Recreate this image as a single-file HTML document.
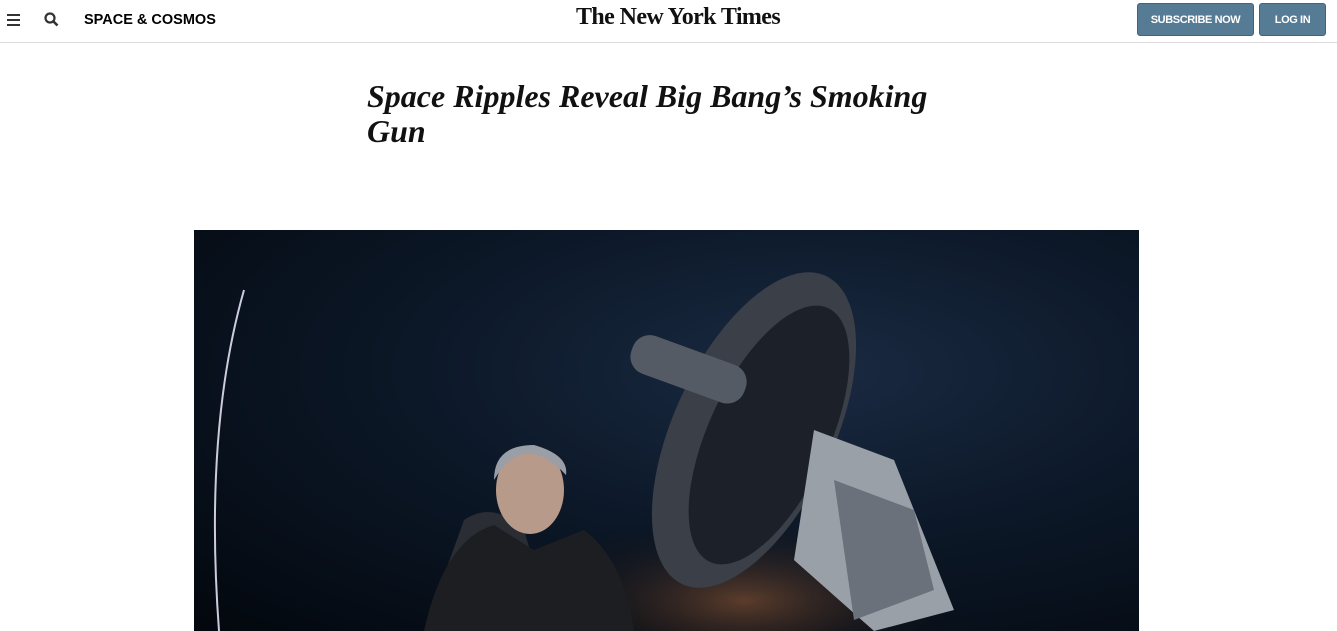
<!DOCTYPE html>
<html><head><meta charset="utf-8"><style>
body{margin:0;width:1337px;height:631px;overflow:hidden;background:#fff;font-family:"Liberation Sans",sans-serif;position:relative}
.hdr{position:absolute;left:0;top:0;width:1337px;height:42px;border-bottom:1px solid #ddd}
.sec{position:absolute;left:84px;top:12px;font-weight:bold;font-size:14.5px;color:#000;letter-spacing:0}
.logo{position:absolute;left:576px;top:4px;font-family:"Liberation Serif",serif;font-weight:bold;font-size:24px;color:#111;letter-spacing:-0.6px;white-space:nowrap}
.btn{position:absolute;top:3px;height:33px;background:#567b95;border:1px solid #3e6580;border-radius:3px;color:#fff;font-weight:bold;font-size:11px;line-height:33px;text-align:center;letter-spacing:-0.4px;box-sizing:border-box}
h1{position:absolute;left:367px;top:79px;margin:0;width:600px;font-family:"Liberation Serif",serif;font-style:italic;font-weight:bold;font-size:32px;line-height:35px;color:#111}
.img{position:absolute;left:194px;top:230px;width:945px;height:401px;overflow:hidden;background:radial-gradient(ellipse at 65% 35%,#1a2a42 0%,#0c1828 45%,#03070d 100%)}
</style></head><body>
<div class="hdr">
<svg style="position:absolute;left:7px;top:14px" width="13" height="12"><rect y="0" width="13" height="2" fill="#333"/><rect y="5" width="13" height="2" fill="#333"/><rect y="10" width="13" height="2" fill="#333"/></svg>
<svg style="position:absolute;left:44px;top:12px" width="15" height="15"><circle cx="6" cy="6" r="4.5" stroke="#333" stroke-width="2.2" fill="none"/><line x1="9.5" y1="9.5" x2="13.5" y2="13.5" stroke="#333" stroke-width="2.6"/></svg>
<div class="sec">SPACE &amp; COSMOS</div>
<div class="logo">The New York Times</div>
<div class="btn" style="left:1137px;width:117px">SUBSCRIBE NOW</div>
<div class="btn" style="left:1259px;width:67px">LOG IN</div>
</div>
<h1>Space Ripples Reveal Big Bang’s Smoking Gun</h1>
<div class="img">
<svg width="945" height="401" style="position:absolute;left:0;top:0">
<defs><radialGradient id="g" cx="0.5" cy="0.8" r="0.6"><stop offset="0" stop-color="#c0703a" stop-opacity="0.45"/><stop offset="1" stop-color="#000" stop-opacity="0"/></radialGradient></defs>
<rect x="350" y="250" width="400" height="151" fill="url(#g)"/>
<path d="M50 60 Q10 200 25 401" stroke="#ccd" stroke-width="2" fill="none"/>
<ellipse cx="560" cy="200" rx="80" ry="170" transform="rotate(25 560 200)" fill="#3a3f48"/>
<ellipse cx="575" cy="205" rx="60" ry="140" transform="rotate(25 575 205)" fill="#1c2028"/>
<rect x="445" y="100" width="120" height="40" rx="18" transform="rotate(20 445 100)" fill="#555b64"/>
<path d="M620 200 L700 230 L760 380 L680 401 L600 330 Z" fill="#9aa0a8"/>
<path d="M640 250 L720 280 L740 360 L660 390 Z" fill="#6b717a"/>
<path d="M270 290 Q300 270 330 300 L360 401 L230 401 Z" fill="#2a2d33"/>
<ellipse cx="336" cy="260" rx="34" ry="44" fill="#b89a8a"/>
<path d="M300 250 Q330 200 372 245 Q375 225 340 215 Q300 215 300 250Z" fill="#9a9ea6"/>
<path d="M230 401 Q250 310 300 295 L340 320 L390 300 Q430 330 440 401 Z" fill="#1c1e22"/>
</svg>
</div>
</body></html>
